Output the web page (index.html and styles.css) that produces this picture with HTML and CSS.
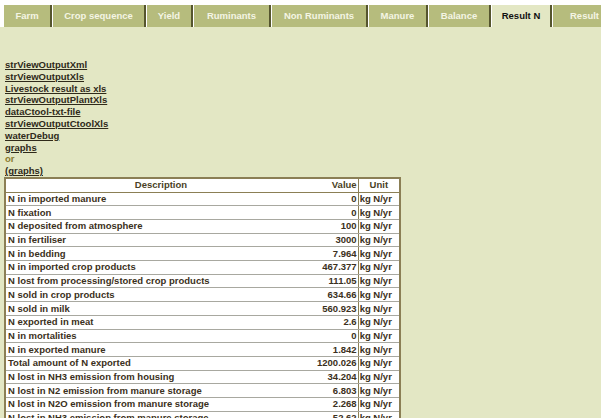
FILE: index.html
```html
<!DOCTYPE html>
<html lang="en">
  <head>
    <meta charset="UTF-8" />
    <title>Result N</title>
    <link rel="stylesheet" href="styles.css">
  </head>
  <body>
    <ul class="tabs">
      <li class="tab" style="width:48px">Farm</li>
      <li class="tab" style="width:93px">Crop sequence</li>
      <li class="tab" style="width:46px">Yield</li>
      <li class="tab" style="width:77px">Ruminants</li>
      <li class="tab" style="width:96px">Non Ruminants</li>
      <li class="tab" style="width:59px">Manure</li>
      <li class="tab" style="width:62px">Balance</li>
      <li class="tab active" style="width:60px">Result N</li>
      <li class="tab last" style="width:60px">Result</li>
    </ul>

    <div class="content">
      <div class="links">
        <a href="#">strViewOutputXml</a><br>
        <a href="#">strViewOutputXls</a><br>
        <a href="#">Livestock result as xls</a><br>
        <a href="#">strViewOutputPlantXls</a><br>
        <a href="#">dataCtool-txt-file</a><br>
        <a href="#">strViewOutputCtoolXls</a><br>
        <a href="#">waterDebug</a><br>
        <a href="#">graphs</a><br>
        <span class="or">or</span><br>
        <a href="#">(graphs)</a>
      </div>

      <table class="result">
        <tr>
          <th class="desc">Description</th>
          <th class="val">Value</th>
          <th class="unit">Unit</th>
        </tr>
        <tr><td>N in imported manure</td><td class="num">0</td><td>kg N/yr</td></tr>
        <tr><td>N fixation</td><td class="num">0</td><td>kg N/yr</td></tr>
        <tr><td>N deposited from atmosphere</td><td class="num">100</td><td>kg N/yr</td></tr>
        <tr><td>N in fertiliser</td><td class="num">3000</td><td>kg N/yr</td></tr>
        <tr><td>N in bedding</td><td class="num">7.964</td><td>kg N/yr</td></tr>
        <tr><td>N in imported crop products</td><td class="num">467.377</td><td>kg N/yr</td></tr>
        <tr><td>N lost from processing/stored crop products</td><td class="num">111.05</td><td>kg N/yr</td></tr>
        <tr><td>N sold in crop products</td><td class="num">634.66</td><td>kg N/yr</td></tr>
        <tr><td>N sold in milk</td><td class="num">560.923</td><td>kg N/yr</td></tr>
        <tr><td>N exported in meat</td><td class="num">2.6</td><td>kg N/yr</td></tr>
        <tr><td>N in mortalities</td><td class="num">0</td><td>kg N/yr</td></tr>
        <tr><td>N in exported manure</td><td class="num">1.842</td><td>kg N/yr</td></tr>
        <tr><td>Total amount of N exported</td><td class="num">1200.026</td><td>kg N/yr</td></tr>
        <tr><td>N lost in NH3 emission from housing</td><td class="num">34.204</td><td>kg N/yr</td></tr>
        <tr><td>N lost in N2 emission from manure storage</td><td class="num">6.803</td><td>kg N/yr</td></tr>
        <tr><td>N lost in N2O emission from manure storage</td><td class="num">2.268</td><td>kg N/yr</td></tr>
        <tr><td>N lost in NH3 emission from manure storage</td><td class="num">52.62</td><td>kg N/yr</td></tr>
      </table>
    </div>
  </body>
</html>
```

FILE: styles.css
```css
html, body {
  margin: 0;
  padding: 0;
}

body {
  background-color: #e3e7c4; /* page background */
  font-family: "Liberation Sans", Arial, sans-serif;
  font-size: 9.5px;
  font-weight: bold;
  color: #3b3020;
  overflow: hidden;
}

.tabs {
  list-style: none;
  margin: 0;
  padding: 5px 0 0 4px;
  background-color: #fff;
  display: flex;
  gap: 1px;
  height: 22px;
}

.tab {
  background-color: #b6bc7d;
  color: #f4f5e4;
  font-size: 9.5px;
  text-align: center;
  line-height: 22px;
  height: 22px;
  border-right: 2px solid #55552e;
  flex-shrink: 0;
  box-sizing: border-box;
}

.tab.active {
  background-color: #e3e7c4;
  color: #111;
}

.tab.last {
  text-align: left;
  padding-left: 17px;
  border-right: 0;
}

.content {
  padding: 32px 0 0 5px;
}

.links {
  line-height: 11.8px;
}

.links a {
  color: #2f2a1a;
  text-decoration: underline;
}

.or {
  color: #8a7a2e;
}

.result {
  border-collapse: collapse;
  background-color: #fff;
  border: 2px solid #8b7f55;
  width: 397px;
  margin-left: -1px;
}

.result th,
.result td {
  padding: 0 1px;
  height: 12.7px;
  line-height: 12px;
  border-bottom: 1px solid #a8a8a0;
  white-space: nowrap;
}

.result th {
  color: #4a3f25;
  border-bottom: 1px solid #8b7f55;
}

.result .desc {
  width: 308px;
  text-align: center;
}

.result .val {
  width: 36px;
  text-align: right;
  border-right: 1px solid #8b7f55;
}

.result .unit {
  text-align: center;
}

.result td.num {
  text-align: right;
  border-right: 1px solid #8b7f55;
}

.result td:first-child {
  padding-left: 2px;
}
```
